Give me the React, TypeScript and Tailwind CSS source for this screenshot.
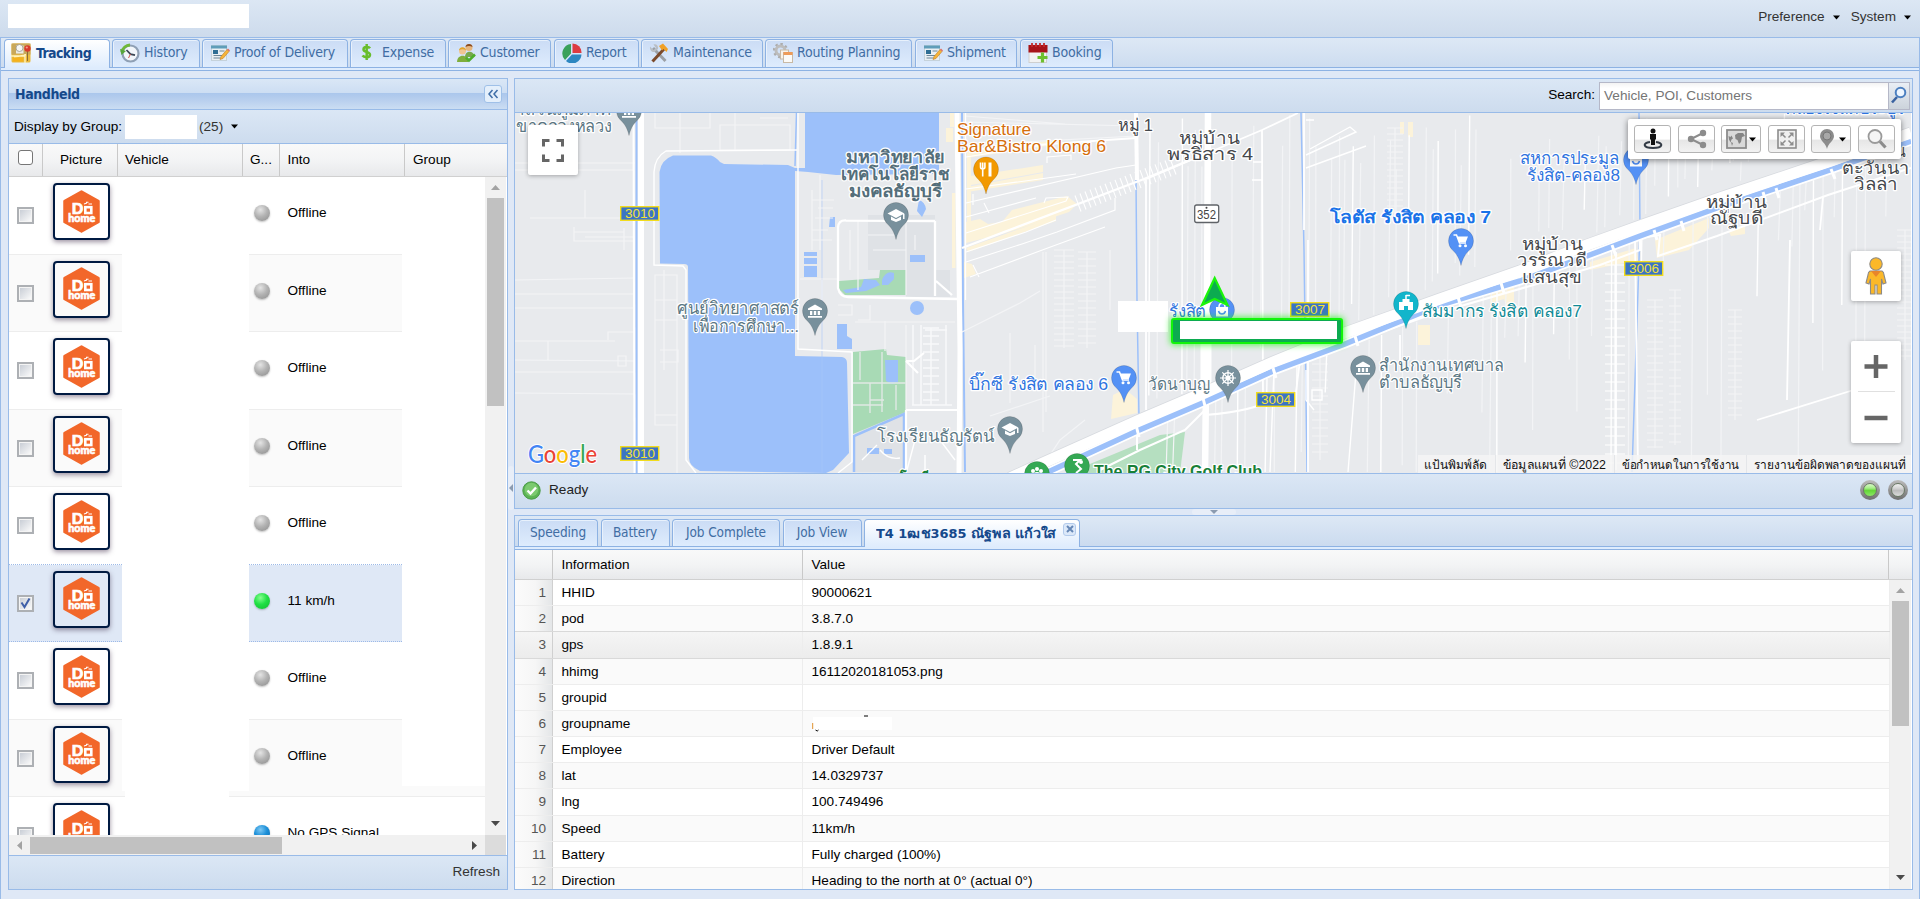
import React from "react";

const TAHOMA = "font-['DejaVu_Sans_Condensed','DejaVu_Sans',sans-serif] [font-stretch:condensed]";

/* ---------- toolbar and tab icons ---------- */

function TabIcon({ name }: { name: string }) {
  switch (name) {
    case "tracking":
      return (
        <svg width="20" height="20" viewBox="0 0 20 20" className="shrink-0">
          <rect x="0.5" y="0.5" width="19" height="19" rx="1.5" fill="#e9b93c" />
          <rect x="0.5" y="0.5" width="19" height="11" fill="#c9a85a" />
          <path d="M0 13h14M3 14l12-2M14 11v9" stroke="#fff3bd" strokeWidth="1.400" />
          <rect x="5" y="2.500" width="7.500" height="8" fill="#ecebe4" />
          <circle cx="8.500" cy="5" r="3.500" fill="#f6f6f2" stroke="#9b968a" strokeWidth=".8" />
          <rect x="2" y="14.500" width="10" height="4" fill="#f5b21d" />
          <path d="M16.500 7v11" stroke="#8b6b35" strokeWidth="1" />
          <circle cx="16.500" cy="5.500" r="3.200" fill="#d93a2c" />
          <circle cx="15.800" cy="4.500" r="1.100" fill="#f39a8d" />
        </svg>
      );
    case "history":
      return (
        <svg width="20" height="20" viewBox="0 0 20 20" className="shrink-0">
          <circle cx="10.500" cy="10.500" r="8" fill="#f2f6fa" stroke="#8fa0b5" strokeWidth="2.200" />
          <path d="M6.500 7l4 4.200 4.500 1" stroke="#3c4653" strokeWidth="1.700" fill="none" />
          <path d="M10.500 11l-2 4" stroke="#d4544c" strokeWidth="1" />
          <path d="M2 9A8.400 8.400 0 0 1 10 2" stroke="#6fb83a" strokeWidth="3" fill="none" />
          <path d="M0 6l1.500 6L6 8z" fill="#58a63c" />
        </svg>
      );
    case "pod":
      return (
        <svg width="20" height="20" viewBox="0 0 20 20" className="shrink-0">
          <rect x="1.500" y="2.500" width="15" height="15" fill="#e9eff3" stroke="#c5d2db" />
          <rect x="1" y="2.500" width="16" height="3" fill="#5f9db9" />
          <rect x="3" y="7" width="5" height="4" fill="#2f6e94" />
          <path d="M9.500 8h5M3.500 12.500h9M3.500 15h7" stroke="#6d8798" />
          <path d="M17 6.500l2 2-6 7-3 1 1-3z" fill="#f6b53a" stroke="#c07a22" strokeWidth=".6" />
          <path d="M17 6.500l1-1 2 2-1 1z" fill="#dd6f68" />
        </svg>
      );
    case "expense":
      return (
        <svg width="20" height="20" viewBox="0 0 20 20" className="shrink-0">
          <path
            d="M12 5.200c-1-1.500-6.500-1.800-6.500 1.200 0 3.300 6.500 2 6.500 5.400 0 3.300-6 2.900-7.500.8M8.700 1v16"
            stroke="#68bd2c"
            strokeWidth="2.500"
            fill="none"
          />
        </svg>
      );
    case "customer":
      return (
        <svg width="20" height="20" viewBox="0 0 20 20" className="shrink-0">
          <circle cx="13" cy="4.500" r="3.500" fill="#e7b67d" />
          <path d="M9.500 4c0-4 7-4 7 0-2-1.500-5-1.500-7 0z" fill="#8a4b20" />
          <path d="M9 14c0-7 9-7 9.500 0z" fill="#78a84d" />
          <circle cx="6.500" cy="8" r="3.500" fill="#f0c592" />
          <path d="M3 7.500c0-4.500 7-4.500 7 0-2-1.600-5-1.600-7 0z" fill="#e0a52b" />
          <path d="M1 19c0-8.500 11-8.500 11.500 0z" fill="#7fae3d" />
          <path d="M10 14.500l3 3 6-6" stroke="#4eae2c" strokeWidth="2.500" fill="none" />
        </svg>
      );
    case "report":
      return (
        <svg width="20" height="20" viewBox="0 0 20 20" className="shrink-0">
          <path d="M9 1v9.500L3 17A9.500 9.500 0 0 1 9 1z" fill="#3aa15a" />
          <path d="M10.500 0.500a9 9 0 0 1 9 9.500h-9z" fill="#dd3b41" />
          <path d="M10 11.500h9.500A9.300 9.300 0 0 1 4 18z" fill="#2d87c1" />
        </svg>
      );
    case "maintenance":
      return (
        <svg width="20" height="20" viewBox="0 0 20 20" className="shrink-0">
          <path d="M4 5l12.500 13" stroke="#9ba0a6" strokeWidth="3" />
          <path d="M1 3.500l3.500 3.800L7 5 4.500 1.500c3-.7 5 1.500 4.500 4.500L5.500 9C3 9.500.5 7 1 3.500z" fill="#b9bec4" />
          <path d="M15 6L3.500 18.500" stroke="#7b4a2b" strokeWidth="3" />
          <path d="M10 3l4-2.500 5 5.500-1.500 3-3-3-1.500 1.500z" fill="#f0a127" />
        </svg>
      );
    case "routing":
      return (
        <svg width="20" height="20" viewBox="0 0 20 20" className="shrink-0">
          <circle cx="7.500" cy="7.500" r="4.500" fill="none" stroke="#bdbdbd" strokeWidth="3" />
          <circle cx="7.500" cy="7.500" r="6.700" fill="none" stroke="#adadad" strokeWidth="2" strokeDasharray="2.500 2.700" />
          <rect x="7.500" y="7" width="8" height="9" fill="#f7f2ea" stroke="#c8b9a5" />
          <rect x="10.500" y="9.500" width="9" height="10" fill="#fbfaf7" stroke="#c8b9a5" />
          <rect x="10.500" y="9" width="9" height="3" fill="#ee9b58" />
        </svg>
      );
    default:
      return (
        <svg width="20" height="20" viewBox="0 0 20 20" className="shrink-0">
          <rect x="1" y="2.500" width="17.500" height="17" fill="#f2f2f2" stroke="#cfcfcf" />
          <rect x="0.500" y="2" width="19" height="7.500" fill="#a71319" />
          <path d="M4 0v4M8 0v4M12 0v4M16 0v4" stroke="#c22a2a" strokeWidth="1.800" />
          <path d="M14.500 9.500v10M9.500 14.500h10" stroke="#6cc02f" strokeWidth="3.200" />
        </svg>
      );
  }
}

const Caret = () => (
  <svg width="7" height="5" viewBox="0 0 7 5">
    <path d="M0 0.500h7L3.500 4.500z" fill="#000" />
  </svg>
);

/* ---------- main tabs ---------- */

const MAIN_TABS: { label: string; icon: string; box: string; gap: string }[] = [
  { label: "History", icon: "history", box: "w-[88px] ml-[2px]", gap: "ml-[4px]" },
  { label: "Proof of Delivery", icon: "pod", box: "w-[146px] ml-[2px]", gap: "ml-[4px]" },
  { label: "Expense", icon: "expense", box: "w-[96px] ml-[2px]", gap: "ml-[4px]" },
  { label: "Customer", icon: "customer", box: "w-[103px] ml-[2px]", gap: "ml-[4px]" },
  { label: "Report", icon: "report", box: "w-[85px] ml-[3px]", gap: "ml-[4px]" },
  { label: "Maintenance", icon: "maintenance", box: "w-[122px] ml-[2px]", gap: "ml-[4px]" },
  { label: "Routing Planning", icon: "routing", box: "w-[147px] ml-[2px]", gap: "ml-[4px]" },
  { label: "Shipment", icon: "pod", box: "w-[102px] ml-[3px]", gap: "ml-[4px]" },
  { label: "Booking", icon: "booking", box: "w-[93px] ml-[3px]", gap: "ml-[4px]" },
];

function MainTabs() {
  return (
    <div className="h-[34px] shrink-0 bg-gradient-to-b from-[#dde8f5] to-[#cbdbef] border-t border-[#99bbe8] flex flex-col">
      <div className={`flex items-end h-[30px] pl-[3px] text-[14px] text-[#416da3] border-b border-[#8db2e3] shrink-0 ${TAHOMA}`}>
        <div className="h-[29px] -mb-px w-[106px] rounded-t-[4px] border border-b-0 border-[#8db2e3] bg-gradient-to-b from-white to-[#deecfd] flex items-center pl-[6px] pb-[2px] gap-[5px] font-bold text-[#15498b] tracking-[-0.6px] whitespace-nowrap z-10">
          <TabIcon name="tracking" />
          Tracking
        </div>
        {MAIN_TABS.map((t) => (
          <div
            key={t.label}
            className={`${t.box} h-[28px] rounded-t-[4px] border border-b-0 border-[#8db2e3] bg-gradient-to-b from-[#cbdcf5] to-[#deecfd] shadow-[inset_0_1px_0_#e8f1fc,inset_1px_0_0_#e8f1fc] flex items-center pl-[7px] pb-[2px] whitespace-nowrap tracking-[-0.2px]`}
          >
            <TabIcon name={t.icon} />
            <span className={t.gap}>{t.label}</span>
          </div>
        ))}
      </div>
      <div className="h-[3px] bg-[#deecfd] border-b border-[#8db2e3]" />
    </div>
  );
}

/* ---------- left panel ---------- */

function Logo() {
  return (
    <div className="w-[57px] h-[57px] rounded-[4px] border-2 border-[#001a42] shadow-[0_2px_5px_rgba(60,40,70,0.5)] flex items-center justify-center pb-px">
      <svg width="39" height="43" viewBox="0 0 39 43">
        <path d="M19.500 1.500L36.500 11v21L19.500 41.500 2.500 32V11z" fill="#f2672a" stroke="#f2672a" strokeWidth="2.500" strokeLinejoin="round" />
        <text x="9.800" y="24" fontSize="15" fontWeight="900" fill="#fff" stroke="#fff" strokeWidth=".7" fontFamily="Lato" textLength="11.500" lengthAdjust="spacingAndGlyphs">
          D
        </text>
        <rect x="23.300" y="17.200" width="6" height="5.800" fill="none" stroke="#fff" strokeWidth="2.600" />
        <path d="M22 14l3-1M26.500 14h3.500M24 12.300h2.500" stroke="#fff" strokeWidth="1.100" />
        <text x="6.200" y="32.300" fontSize="10.500" fontWeight="900" fill="#fff" stroke="#fff" strokeWidth=".6" fontFamily="Lato" textLength="27" lengthAdjust="spacingAndGlyphs">
          home
        </text>
      </svg>
    </div>
  );
}

function Check({ on }: { on?: boolean }) {
  return (
    <div className="w-[17px] h-[17px] border-2 border-[#adb0b4] bg-[#f4f4f4] p-px">
      <div className="w-full h-full bg-gradient-to-br from-[#c9ced6] to-[#fafafa]">
        {on && (
          <svg width="11" height="11" viewBox="0 0 11 11">
            <path d="M1.500 4.500l3 4.500 5-8.500" fill="none" stroke="#3f5fa8" strokeWidth="2" />
          </svg>
        )}
      </div>
    </div>
  );
}

const BALLS: Record<string, string> = {
  gray: "bg-[radial-gradient(circle_at_40%_30%,#e4e4e4_0%,#b4b4b4_45%,#8b8b8b_100%)]",
  green: "bg-[radial-gradient(circle_at_40%_30%,#86ff8f_0%,#21e045_45%,#12ba2e_100%)]",
  blue: "bg-[radial-gradient(circle_at_40%_30%,#7cc8f4_0%,#1c8fd8_45%,#0f6cae_100%)]",
};

const VEHICLES = [
  { status: "Offline", ball: "gray" },
  { status: "Offline", ball: "gray" },
  { status: "Offline", ball: "gray" },
  { status: "Offline", ball: "gray" },
  { status: "Offline", ball: "gray" },
  { status: "11 km/h", ball: "green" },
  { status: "Offline", ball: "gray" },
  { status: "Offline", ball: "gray" },
  { status: "No GPS Signal", ball: "blue" },
];

function VehicleRow({ index }: { index: number }) {
  const v = VEHICLES[index];
  const selected = index === 5;
  const alt = index % 2 === 1;
  const line = selected
    ? "border-b border-dotted border-[#9dbae8] bg-[#dfe8f6]"
    : index === 4
      ? "border-b border-dotted border-[#9dbae8]"
      : alt
        ? "border-b border-[#ededed] bg-[#fafafa]"
        : "border-b border-[#ededed]";
  const partial = index === 7;
  return (
    <div className="flex h-[77.5px] shrink-0">
      <div className={`w-[113px] flex ${line}`}>
        <div className="w-[34px] pl-[8px] pt-[30px]">
          <Check on={selected} />
        </div>
        <div className="pt-[6px] pl-[10px]">
          <Logo />
        </div>
      </div>
      <div className="w-[127px] flex items-end justify-between">
        {partial && <div className="w-[3px] h-[6px] bg-[#fafafa] border-b border-[#ededed]" />}
        {partial && <div className="w-[20px] h-[6px] bg-[#fafafa] border-b border-[#ededed]" />}
      </div>
      <div className={`w-[153px] flex items-start ${line}`}>
        <div className={`mt-[28px] ml-[5px] size-[16px] rounded-full shadow-[0_1px_2px_rgba(0,0,0,0.25)] ${BALLS[v.ball]}`} />
        <div className="mt-[26px] ml-[17.500px] leading-[20px] whitespace-nowrap">{v.status}</div>
      </div>
      <div className="w-[83px] flex items-end">
        {partial && <div className="w-full h-[11px] bg-[#fafafa] border-b border-[#ededed]" />}
      </div>
    </div>
  );
}

const HEAD = "bg-gradient-to-b from-[#f9f9f9] via-[#f3f4f5] to-[#e8e9eb]";

function Arrow({ dir, dark }: { dir: "up" | "down" | "left" | "right"; dark?: boolean }) {
  const d = { up: "M1 7l4.500-5 4.500 5z", down: "M1 3l4.500 5L10 3z", left: "M8 1L3 5.500 8 10z", right: "M3 1l5 4.500L3 10z" }[dir];
  return (
    <svg width="11" height="11" viewBox="0 0 11 11">
      <path d={d} fill={dark ? "#4a4a4a" : "#a3a3a3"} />
    </svg>
  );
}

function LeftPanel() {
  return (
    <div className="w-[500px] h-[812px] border border-[#99bbe8] flex flex-col shrink-0 bg-white">
      <div className={`h-[31px] shrink-0 border-b border-[#99bbe8] bg-[linear-gradient(#dae7f6_0%,#cddef3_45%,#abc7ec_48%,#b8cfee_70%,#cbddf3_100%)] flex items-center justify-between pl-[6px] pr-[5px] text-[14px] font-bold text-[#15498b] tracking-[-0.4px] ${TAHOMA}`}>
        Handheld
        <div className="size-[18px] rounded-[3px] border border-[#9fc0e8] bg-[#e4effb] flex items-center justify-center">
          <svg width="12" height="12" viewBox="0 0 12 12">
            <path d="M5.500 2L2 6l3.500 4M10.500 2L7 6l3.500 4" fill="none" stroke="#3f6ea8" strokeWidth="1.500" />
          </svg>
        </div>
      </div>
      <div className="h-[34px] shrink-0 border-b border-[#99bbe8] bg-gradient-to-b from-[#dbe7f5] to-[#cddcee] flex items-center pl-[5px]">
        <span className="w-[111px] pt-[2px] whitespace-nowrap">Display by Group:</span>
        <span className="w-[72px] h-[24px] bg-white" />
        <span className="ml-[2px] pt-[2px] text-[#333]">(25)</span>
        <span className="ml-[8px] flex">
          <Caret />
        </span>
      </div>
      <div className={`h-[33px] shrink-0 flex border-b border-[#d0d0d0] leading-[32px] ${HEAD}`}>
        <div className="w-[34px] border-r border-[#c9c9c9] pl-[9px] pt-[6px]">
          <div className="size-[15px] rounded-[3px] border-[1.500px] border-[#767676] bg-white" />
        </div>
        <div className="w-[75px] border-r border-[#c9c9c9] pl-[17px]">Picture</div>
        <div className="w-[125px] border-r border-[#c9c9c9] pl-[7px]">Vehicle</div>
        <div className="w-[37px] border-r border-[#c9c9c9] pl-[7px]">G...</div>
        <div className="w-[125px] border-r border-[#c9c9c9] pl-[7.500px]">Into</div>
        <div className="pl-[8px]">Group</div>
      </div>
      <div className="h-[658px] shrink-0 flex">
        <div className="w-[476px] h-full overflow-hidden flex flex-col">
          {VEHICLES.map((_, i) => (
            <VehicleRow key={i} index={i} />
          ))}
        </div>
        <div className="w-[21px] h-full bg-[#f1f1f1] flex flex-col items-center justify-between">
          <div className="flex flex-col items-center pt-[6px]">
            <Arrow dir="up" />
            <div className="mt-[4px] w-[17px] h-[208px] bg-[#c1c1c1]" />
          </div>
          <div className="pb-[6px]">
            <Arrow dir="down" dark />
          </div>
        </div>
      </div>
      <div className="h-[20px] shrink-0 flex">
        <div className="w-[476px] bg-[#f1f1f1] flex items-center">
          <div className="w-[21px] pl-[5px]">
            <Arrow dir="left" />
          </div>
          <div className="w-[252px] h-[17px] bg-[#c1c1c1]" />
          <div className="ml-auto pr-[5px]">
            <Arrow dir="right" dark />
          </div>
        </div>
        <div className="w-[21px] bg-[#dcdcdc]" />
      </div>
      <div className="flex-1 border-t border-[#99bbe8] bg-gradient-to-b from-[#dbe7f5] to-[#cddcee] flex items-center justify-end pr-[7px] text-[#333]">
        Refresh
      </div>
    </div>
  );
}

/* ---------- map ---------- */

const GLYPHS: Record<string, React.ReactNode> = {
  museum: (
    <g fill="#fff">
      <path d="M-7-2.500L0-6.500 7-2.500V-1H-7z" />
      <path d="M-5 0h2.300v4H-5zM-1.200 0h2.400v4h-2.400zM2.700 0H5v4H2.700zM-7 5H7v1.700H-7z" />
    </g>
  ),
  school: (
    <g fill="#fff">
      <path d="M0-6L8.500-1.500 0 3-8.500-1.500z" />
      <path d="M-5 1.500L0 4.200 5 1.500V5L0 7-5 5zM7-1h1.500v5H7z" />
    </g>
  ),
  food: (
    <g stroke="#fff" strokeWidth="1.600" fill="none">
      <path d="M-5.500-7v4.500q0 2 2.200 2t2.200-2V-7M-3.300-7v14" />
      <path d="M4-7v14" strokeWidth="3" />
    </g>
  ),
  cart: (
    <g>
      <path d="M-7.500-6h3l3 8H5" stroke="#fff" strokeWidth="1.500" fill="none" />
      <path d="M-4-4.500H7L4.800 1H-2z" fill="#fff" />
      <circle cx="-1" cy="4.800" r="1.500" fill="#fff" />
      <circle cx="4.500" cy="4.800" r="1.500" fill="#fff" />
    </g>
  ),
  wheel: (
    <g stroke="#fff" fill="none" strokeWidth="1.500">
      <circle r="5.200" />
      <circle r="1.800" />
      <path d="M0-8V8M-8 0H8M-5.700-5.700L5.700 5.700M-5.700 5.700L5.700-5.700" strokeWidth="1.200" />
    </g>
  ),
  city: (
    <g>
      <path d="M-7-2h14v8h-5V2h-4v4h-5zM-3.500-5h7v3h-7z" fill="#fff" />
      <path d="M0-9v4M0-8.500h4" stroke="#fff" strokeWidth="1.500" />
    </g>
  ),
  bag: (
    <g>
      <path d="M-6-3H6V6.500H-6z" fill="#fff" />
      <path d="M-3-3c0-5 6-5 6 0" stroke="#fff" strokeWidth="1.500" fill="none" />
      <path d="M-3.500 1c1 4 6 4 7 0" stroke="#4f8df5" strokeWidth="1.500" fill="none" />
    </g>
  ),
  golf: (
    <g stroke="#fff" fill="none" strokeWidth="2">
      <path d="M-4-6H3L-1-2 4 3-1 7" />
      <circle cx="4" cy="-4" r="1" />
    </g>
  ),
  park: (
    <g fill="#fff">
      <circle cx="-4" cy="-3" r="2" />
      <circle cx="0" cy="-5" r="2" />
      <circle cx="4" cy="-3" r="2" />
      <circle cy="2" r="4" />
    </g>
  ),
};

const PINS: [number, number, string, string][] = [
  [629, 111, "#78909c", "museum"],
  [896, 215, "#78909c", "school"],
  [815, 311, "#78909c", "museum"],
  [986, 169.5, "#f29900", "food"],
  [1124, 378, "#5491f5", "cart"],
  [1228, 378, "#78909c", "wheel"],
  [1010, 429, "#78909c", "school"],
  [1037, 474, "#34a853", "park"],
  [1077, 466, "#34a853", "golf"],
  [1406, 304, "#12b5cb", "city"],
  [1363, 368, "#78909c", "museum"],
  [1461, 241, "#5491f5", "cart"],
  [1636, 160, "#5491f5", "bag"],
  [1222, 310, "#5491f5", "bag"],
];

/* text, x, baseline, width, colour, weight */
const SLATE = "#5b7784";
const BLUE = "#1a73e8";
const DARK = "#45484c";
const LABELS: [string, number, number, number, string, number][] = [
  ["าส่วนภูมิภาค", 515, 115, 96, SLATE, 400],
  ["ขาคลองหลวง", 516, 132, 96, SLATE, 400],
  ["มหาวิทยาลัย", 846, 163, 99, "#546e7a", 600],
  ["เทคโนโลยีราช", 841, 180, 109, "#546e7a", 600],
  ["มงคลธัญบุรี", 849, 197, 93, "#546e7a", 600],
  ["ศูนย์วิทยาศาสตร์", 677, 314, 122, SLATE, 400],
  ["เพื่อการศึกษา...", 693, 332, 106, SLATE, 400],
  ["Signature", 957, 135, 74, "#d56e0c", 400],
  ["Bar&Bistro Klong 6", 957, 152, 149, "#d56e0c", 400],
  ["หมู่ 1", 1118, 131, 35, DARK, 500],
  ["หมู่บ้าน", 1179, 144, 61, DARK, 500],
  ["พรธิสาร 4", 1167, 160, 86, DARK, 500],
  ["โลตัส รังสิต คลอง 7", 1330, 223, 161, BLUE, 600],
  ["บิ๊กซี รังสิต คลอง 6", 969, 390, 139, "#2f74e0", 400],
  ["วัดนาบุญ", 1148, 390, 62, SLATE, 400],
  ["โรงเรียนธัญรัตน์", 877, 442, 118, SLATE, 400],
  ["รังสิต", 1169, 317, 37, "#2f74e0", 400],
  ["สัมมากร รังสิต คลอง7", 1422, 317, 160, "#128b97", 400],
  ["สำนักงานเทศบาล", 1379, 371, 125, SLATE, 400],
  ["ตำบลธัญบุรี", 1379, 388, 83, SLATE, 400],
  ["สหการประมูล", 1520, 164, 99, "#2f74e0", 400],
  ["รังสิต-คลอง8", 1527, 181, 93, "#2f74e0", 400],
  ["หมู่บ้าน", 1706, 208, 61, DARK, 500],
  ["ณัฐบดี", 1710, 224, 53, DARK, 500],
  ["หมู่บ้าน", 1522, 250, 61, DARK, 500],
  ["วรรณวดี", 1517, 266, 70, DARK, 500],
  ["แสนสุข", 1522, 283, 60, DARK, 500],
  ["น", 1896, 157, 10, DARK, 500],
  ["ตะวันนา", 1842, 174, 68, DARK, 500],
  ["วิลล่า", 1854, 190, 44, DARK, 500],
  ["คลองรังสิตประยูร", 1785, 114, 120, "#2f74e0", 400],
  ["The RG City Golf Club", 1094, 477, 168, "#188038", 700],
  ["โรงเรียน", 900, 485, 45, "#188038", 600],
];

const SHIELDS: [number, number, string][] = [
  [620, 206, "3010"],
  [620, 446, "3010"],
  [1290, 302, "3007"],
  [1256, 392, "3004"],
  [1624, 261, "3006"],
];

const MAIN_ROAD = "M1010 478L1043 463 1137 421 1205 392 1273 362 1342 334 1440 299 1520 271 1587 245 1640 226 1717 199 1833 160 1911 133";
const CANAL = "M1035 478L1137 431 1205 402 1273 371 1345 344 1440 305 1520 281 1587 256 1640 236 1717 208 1833 169 1911 141";

/* y of the main road at a given x, used to keep side streets off it */
function roadY(x: number) {
  const p = [[1010, 478], [1137, 421], [1273, 362], [1440, 299], [1587, 245], [1717, 199], [1911, 133]];
  for (let i = 1; i < p.length; i++) {
    if (x <= p[i][0]) {
      const t = (x - p[i - 1][0]) / (p[i][0] - p[i - 1][0]);
      return p[i - 1][1] + t * (p[i][1] - p[i - 1][1]);
    }
  }
  return 133;
}

const rnd = (n: number) => {
  const v = Math.sin(n * 127.1) * 43758.5453;
  return v - Math.floor(v);
};

function sideStreets() {
  let white = "";
  let faint = "";
  for (let i = 0; i < 105; i++) {
    const x = 1150 + i * 7.2 + rnd(i) * 4;
    const ry = roadY(x);
    const up = rnd(i + 300) > 0.45;
    const y1 = up ? 113 + rnd(i + 50) * 60 : ry + 14;
    const y2 = up ? Math.max(y1, ry - 6 - rnd(i + 90) * 30) : Math.min(472, ry + 40 + rnd(i + 70) * 260);
    const seg = `M${x.toFixed(1)} ${y1.toFixed(1)}L${(x - 2 + rnd(i + 7) * 2).toFixed(1)} ${y2.toFixed(1)}`;
    if (i % 4 === 0) white += seg;
    else faint += seg;
  }
  return { white, faint };
}

const STREETS = sideStreets();

function comb(x: number, y1: number, y2: number, w: number, step: number) {
  let d = `M${x} ${y1}V${y2}`;
  for (let y = y1; y < y2; y += step) d += `M${x - w} ${y}h${w * 2}`;
  return d;
}

/* short lanes crossing the street that climbs from 966,248 to 1190,160 */
function lanes() {
  let d = "";
  for (let x = 1078; x < 1178; x += 5) {
    const y = 248 - ((x - 966) * 70) / 180;
    d += `M${x - 3} ${y - 9}l6 16`;
  }
  return d;
}

const LANES = lanes();

function MapDrawing() {
  return (
    <svg width="1396" height="360" viewBox="515 113 1396 360" className="block">
      <rect x="515" y="113" width="1396" height="360" fill="#e8eaed" />
      <path d="M868 215h67v55h-67zM906 270h44v27h-44zM855 432l50-20v60h-50z" fill="#dfe2e6" />

      {/* commercial areas */}
      <g fill="#fcf3da">
        <path d="M950 113h4v14h-4zM946 128h7v14h-7zM952 193h3.500v75h-3.500z" />
        <path d="M967 155h4v68h-4zM971 176l72-11v7l-72 13zM967 187l76-14v7l-76 12zM967 152l80-11v5l-80 12z" />
        <path d="M966 243V222l14-3 8 5 14-2 10-12 55-14 10 8-8 8-60 20zM966 248l90-32v5l-88 31zM964 262l8 2 4 10-12 4z" />
        <path d="M1113 395l12-6 12 10v14l-26 6zM1408 122h5v15h-5zM1400 122h4v12h-4z" />
        <path d="M1590 262l46-14 2 12-48 10zM1655 240l54-22v10l-20 22-32 8zM1729 232l16-6v8l-14 2zM1490 293l24-8v20h-8l-2-6-14 4zM1418 325h12v20h-12z" />
      </g>

      {/* parks */}
      <path d="M839 281l40-3 1-8h26v25h-61l-6-6zM853 352l33-3 1 6 19 2v55l-53 22z" fill="#a8dab5" />
      <path d="M1085 466l75-31 25-3-5 41h-94z" fill="#b5dfc0" />

      {/* water */}
      <g fill="#9cc0fa">
        <path d="M659.500 172Q661 160 673 155.500L711 155.500Q716 157 720 162L724 164 788 165 795 168V356L842 357Q847 358 847 363L849 453 833 470 826 473 700 471Q689 466 689 458L688 267Q688 264 684 264L660 263.500z" />
        <path d="M805 113H939V174L836 175 808 172 795 171V168H805z" />
        <path d="M804 252h13v4h-13zM804 258h13v6h-13zM804 266h13v11h-13zM830 217h5v10h-6zM837 324h10v12l5 3v10h-15zM910 255h15v7h-15zM919 200q6 2 7 9l-4 8-5-6zM885 360h13v22l-6 2-6-3z" />
        <path d="M843 290l18-3 3-8 12 1 4 5-14 6-20 2zM882 280q4-10 12-7v6l-6 6h-6z" />
        <ellipse cx="917" cy="308" rx="7" ry="7" />
        <path d="M867 448h12v6h-12zM884 449h8v5h-8z" />
      </g>
      <g fill="none" stroke="#9cc0fa">
        <path d="M636.500 113V473" strokeWidth="2" />
        <path d="M796.500 113L795 166" strokeWidth="1.500" />
        <path d="M962 113L963 300 965 472" strokeWidth="2" />
        <path d="M1136 180L1137 300 1139 418" strokeWidth="1.500" />
        <path d="M1301 113L1304 250 1307 472" strokeWidth="1.500" />
        <path d="M1639 113L1640 230 1632 472" strokeWidth="1.500" />
        <path d="M854 472V436L904 414V473" strokeWidth="2.500" />
        <path d="M822 180V473" stroke="#a9c8fa" strokeWidth=".6" />
      </g>

      {/* faint streets */}
      <g fill="none" stroke="#f3f4f6" strokeWidth="1.200">
        <path d={STREETS.faint} />
        <path d="M515 163h120M515 170h118M585 190v28M530 218h104M574 227v14h60M574 232h50M585 237h50M515 280l120-2M515 294h120M515 308h118M608 340v-8h26M515 341h100M548 341v20M515 360l120 1M515 372h120M515 393l120 1M624 228v22M618 356v10h8v-10z" />
        <path d={comb(1064, 250, 348, 10, 6)} />
        <path d={comb(1087, 252, 348, 9, 7)} />
        <path d={comb(1320, 340, 460, 8, 8)} />
        <path d={comb(1395, 128, 220, 8, 6)} />
        <path d={comb(1655, 300, 448, 8, 7)} />
        <path d={comb(1675, 290, 445, 6, 8)} />
        <path d={comb(1735, 310, 420, 7, 7)} />
        <path d={comb(1905, 230, 360, 8, 6)} />
        <path d="M655 113v15h55v-15M680 113v40M720 125h70v25h-70zM735 113v38M760 118h28M655 275v150h22V275zM655 300h22M655 320h22M655 415h22v60M664 270v100M660 350h18v12h-18" />
        <path d="M812 190v60M820 175v75M812 200h22M818 208h15M815 218h18M812 230h16M812 240h20M850 230v40M858 220v70M868 235h30M873 250h33M906 220v75M915 235v15M800 279h38M822 280v20M838 305h14v10h-14M870 305v15h-12M885 321v30M906 325v140M855 322h100" />
        <path d="M965 116l100 8M965 122l170 4M966 145l170-9" />
        <path d="M1010 333v70M1035 345v45M1043 252v180M1046 252v160M990 416l60-20M960 333l60-30 20-12M1040 470l20-30 25-20M1110 250v60" />
      </g>
      <g fill="none" stroke="#fff" strokeWidth="1.100">
        <path d={LANES} />
        <path d="M966 203l150-35 20-3M966 217l70-19M984 203l5 10M973 194v11M966 233l100-32 2-4-22 1-2 5M1047 163v-6l24-2v5M966 252l60-20 30-12M966 262l56-18 35-12 58-22v-12M970 277l75-28 60-22M979 277l-6-12M966 189l110-15M966 157l90-14" />
      </g>
      <path d={comb(931, 328, 405, 8, 8)} stroke="#f8f9fa" strokeWidth="1.500" fill="none" />
      <path d="M913 325v80M921 325v80M946 325v80M912 405h40M925 330h22" stroke="#f8f9fa" strokeWidth="1.500" fill="none" />
      <path d={comb(1615, 265, 465, 10, 9)} stroke="#fff" strokeWidth="1.200" fill="none" />

      {/* streets */}
      <g fill="none" stroke="#fff" strokeWidth="1.400">
        <path d={STREETS.white} />
        <path d="M654 172Q655 157 666 151L797 150M654 172V265L683 266 686 270V460L696 473M798 113V349L852 352V462L838 473" />
        <path d="M1146 180V410M1144 180L1262 130 1298 113M1262 130L1263 400M1304 113V230M1308 240V472M1300 360l-5 40" strokeWidth="1.800" />
        <path d="M1306 155l50-23-6-5-40 22M1306 168l60-22M1306 120h8M1252 180h10M1253 162h9M1348 472l8-100M1274 370L1270 472M1306 370v30l8 10M1312 390h10v10h-10z" />
        <path d="M1205 410L1185 430 1140 450 1100 470M1205 415q60-5 70-20M1137 435v15" strokeWidth="2" />
        <path d="M1330 350L1430 315 1530 286 1600 265 1640 250V238L1660 235 1658 256 1717 236 1828 195 1911 168" strokeWidth="2" />
        <path d="M1757 420L1860 388M1790 240L1787 400M1823 197L1820 230M1616 252V470M1635 240L1638 470M1400 335v30" strokeWidth="1.800" />
        <path d="M860 380v-28M853 383h53M870 383v30M853 405h30M896 385v25M882 352v60M870 400h14" stroke="#e0e9e4" />
        <path d="M880 450q8 10 20 8M862 460l15-15M915 440l-8 30M925 455v18M940 440l15 20" />
      </g>
      <g fill="none" stroke="#fff">
        <path d="M838 228Q838 220 846 220.500L935 221M838 226V288Q840 297 848 297L958 299M935 221V296M952 295l-16-14" strokeWidth="2.300" />
        <path d="M906 410L960 410M906 410V472M906 361h8l10-8M906 361l12 12" strokeWidth="2.200" />
        <path d="M633.500 113L634.500 473" strokeWidth="2" />
        <path d="M641 113V473" strokeWidth="6" />
        <path d="M957 113L960 350 959 473" strokeWidth="5" />
        <path d="M965.500 113V300" strokeWidth="1.300" />
        <path d="M962 248L1144 179 1190 160" strokeWidth="2.200" />
        <path d="M966 150L1136 138" strokeWidth="1.800" />
        <path d="M1136 113L1137 180" strokeWidth="4" />
        <path d="M1208 113L1207 300 1205 473" strokeWidth="6.500" />
        <path d="M1206 335V400" strokeWidth="11" />
      </g>

      {/* main road with the canal beside it */}
      <path d={MAIN_ROAD} fill="none" stroke="#d7dadf" strokeWidth="12.500" />
      <path d={CANAL} fill="none" stroke="#fff" strokeWidth="9" />
      <path d={CANAL} fill="none" stroke="#9cc0fa" strokeWidth="5.500" />
      <path d={MAIN_ROAD} fill="none" stroke="#fff" strokeWidth="11" />
      <path d="M1136 425l3 12M1203 398l3 12M1273 368l3 10M1355 336l3 10M1458 297l3 10M1501 283l3 10M1612 245l4 11M1654 230l3 10M1681 221l3 10M1763 192l3 10M1776 188l3 10M1831 169l4 10" stroke="#fff" strokeWidth="3" />

      {/* signs */}
      {SHIELDS.map(([x, y, t]) => (
        <g key={`${x}-${y}`}>
          <rect x={x + 0.7} y={y + 0.7} width="38" height="13.600" fill="#3b74c4" stroke="#f2dc1c" strokeWidth="1.400" />
          <text x={x + 5} y={y + 12} fontSize="12" fill="#f5e235" fontFamily="Liberation Sans" textLength="30" lengthAdjust="spacingAndGlyphs">
            {t}
          </text>
        </g>
      ))}
      <rect x="1194.700" y="205" width="24" height="17.500" rx="2" fill="#fff" stroke="#5f6368" strokeWidth="1.300" />
      <text x="1197" y="219" fontSize="12" fill="#444" fontFamily="Liberation Sans" textLength="19" lengthAdjust="spacingAndGlyphs">
        352
      </text>
      <circle cx="1206.500" cy="207.800" r="1" fill="#444" />

      {PINS.map(([x, y, fill, glyph]) => (
        <g key={`${x}-${y}`} transform={`translate(${x} ${y})`}>
          <path
            d="M0 24.500C-2 16-5 12.500-9 8.600A12.500 12.500 0 1 1 9 8.600C5 12.500 2 16 0 24.500z"
            fill={fill}
            stroke="rgba(0,0,0,.18)"
            strokeWidth=".7"
          />
          {GLYPHS[glyph]}
        </g>
      ))}

      {LABELS.map(([t, x, y, w, c, weight], i) => (
        <text
          key={i}
          x={x}
          y={y}
          fontSize="17"
          fontWeight={weight}
          fill={c}
          stroke="#fff"
          strokeWidth="2.500"
          strokeLinejoin="round"
          paintOrder="stroke"
          fontFamily="Liberation Sans, sans-serif"
          textLength={w}
          lengthAdjust="spacingAndGlyphs"
        >
          {t}
        </text>
      ))}

      <text
        x="528"
        y="463"
        fontSize="25"
        fontFamily="Lato, sans-serif"
        fontWeight="500"
        stroke="#fff"
        strokeWidth="2"
        paintOrder="stroke"
        textLength="69"
        lengthAdjust="spacingAndGlyphs"
      >
        <tspan fill="#4285f4">G</tspan>
        <tspan fill="#ea4335">o</tspan>
        <tspan fill="#fbbc04">o</tspan>
        <tspan fill="#4285f4">g</tspan>
        <tspan fill="#34a853">l</tspan>
        <tspan fill="#ea4335">e</tspan>
      </text>

      {/* map credits */}
      <rect x="1418" y="455" width="493" height="18" fill="#f5f5f5" fillOpacity=".8" />
      <path d="M1495.500 455v18M1614.500 455v18M1746.500 455v18" stroke="#e4e6e9" />
      <g fontSize="12" fill="#111" fontFamily="Liberation Sans, sans-serif">
        <text x="1424" y="469" textLength="63" lengthAdjust="spacingAndGlyphs">แป้นพิมพ์ลัด</text>
        <text x="1503" y="469" textLength="103" lengthAdjust="spacingAndGlyphs">ข้อมูลแผนที่ ©2022</text>
        <text x="1622" y="469" textLength="117" lengthAdjust="spacingAndGlyphs">ข้อกำหนดในการใช้งาน</text>
        <text x="1754" y="469" textLength="152" lengthAdjust="spacingAndGlyphs">รายงานข้อผิดพลาดของแผนที่</text>
      </g>

      {/* tracked vehicle */}
      <rect x="1118" y="301" width="50" height="31" fill="#fff" />
      <path d="M1214.700 278L1202 305 1214.700 299 1227.500 305z" fill="#0cab50" stroke="#1bf50a" strokeWidth="2.200" />
    </svg>
  );
}

const TOOL = "h-[28px] rounded-[3px] border border-[#b4b4b4] bg-gradient-to-b from-white from-50% via-[#e6e6e6] via-55% to-[#f2f2f2] flex items-center justify-center gap-[2px]";

function MapTools() {
  return (
    <div className="absolute left-[1113px] top-[6px] w-[273px] h-[40px] bg-white rounded-[2px] shadow-[0_1px_6px_rgba(0,0,0,0.5)] flex items-center pl-[6px]">
      <div className={`${TOOL} w-[37px]`}>
        <svg width="22" height="22" viewBox="0 0 22 22">
          <circle cx="11" cy="3" r="2.500" fill="#111" />
          <path d="M8 6h6v5l-1 1v5H9v-5l-1-1z" fill="#111" />
          <path d="M8 14c-8 1-7 6 3 6s11-5 3-6" fill="none" stroke="#333b45" strokeWidth="2" />
        </svg>
      </div>
      <div className={`${TOOL} w-[37px] ml-[7px]`}>
        <svg width="20" height="20" viewBox="0 0 20 20" fill="#8c8c8c">
          <path d="M16 4L4 10l12 6" fill="none" stroke="#8c8c8c" strokeWidth="2" />
          <circle cx="16" cy="4" r="3.200" />
          <circle cx="4" cy="10" r="3.200" />
          <circle cx="16" cy="16" r="3.200" />
        </svg>
      </div>
      <div className={`${TOOL} w-[40px] ml-[6px]`}>
        <svg width="21" height="20" viewBox="0 0 21 20" className="shrink-0">
          <rect x="1" y="1" width="19" height="18" fill="#d9d9d9" stroke="#8c8c8c" strokeWidth="1.800" />
          <path d="M2.500 7l2 1 1-1.500 1.500 3-1.500 1-1 3-1.500-3zM5 13l2 1-1 3zM9 6l3-2 5 0 2 3-3 1-1 5-2 2-1.500-4-2-1z" fill="#858585" />
        </svg>
        <Caret />
      </div>
      <div className={`${TOOL} w-[37px] ml-[7px]`}>
        <svg width="20" height="20" viewBox="0 0 20 20">
          <rect x="1" y="1" width="18" height="18" fill="#f0f0f0" stroke="#8c8c8c" strokeWidth="1.600" />
          <path d="M3.500 8V3.500H8zM12 3.500h4.500V8zM3.500 12v4.500H8zM16.500 12v4.500H12z" fill="#8c8c8c" />
          <path d="M5 5l3.500 3.500M15 5l-3.500 3.500M5 15l3.500-3.500M15 15l-3.500-3.500" stroke="#8c8c8c" strokeWidth="1.500" />
        </svg>
      </div>
      <div className={`${TOOL} w-[40px] ml-[6px]`}>
        <svg width="20" height="20" viewBox="0 0 20 20">
          <path d="M10 20C9 14 3 12 3 7a7 7 0 0 1 14 0c0 5-6 7-7 13z" fill="#8c8c8c" />
          <circle cx="10" cy="7" r="4" fill="#a8a8a8" stroke="#777" />
        </svg>
        <Caret />
      </div>
      <div className={`${TOOL} w-[37px] ml-[7px]`}>
        <svg width="20" height="20" viewBox="0 0 20 20">
          <circle cx="8" cy="7.500" r="6.500" fill="#f5f5f5" stroke="#9a9a9a" strokeWidth="1.800" />
          <path d="M13 12.500l5.500 6" stroke="#8c8c8c" strokeWidth="3.200" />
        </svg>
      </div>
    </div>
  );
}

const MAPBTN = "absolute bg-white rounded-[2px] shadow-[0_1px_4px_rgba(0,0,0,0.3)]";

function MapView() {
  return (
    <div className="relative w-[1396px] h-[360px] overflow-hidden shrink-0">
      <MapDrawing />
      <div className={`${MAPBTN} left-[13px] top-[12px] size-[50px] flex items-center justify-center`}>
        <svg width="22" height="23" viewBox="0 0 22 23">
          <path d="M1.500 7.500v-6h6M14.500 1.500h6v6M20.500 15.500v6h-6M7.500 21.500h-6v-6" fill="none" stroke="#666" strokeWidth="3" />
        </svg>
      </div>
      <div className={`${MAPBTN} left-[1336px] top-[138px] size-[50px] flex items-center justify-center`}>
        <svg width="22" height="38" viewBox="0 0 22 38" stroke="#8d8a86" strokeWidth="1.100">
          <path d="M5 14h12q2 1 2 4l2 8-3 1-1.500-5v15H12V28h-2v9H5.500V22L4 27l-3-1 2-8q0-3 2-4z" fill="#fbb829" />
          <circle cx="11" cy="7" r="6.200" fill="#fbb829" />
          <path d="M6 14h10l-5 6z" fill="#e8852a" stroke="none" />
        </svg>
      </div>
      <div className={`${MAPBTN} left-[1336px] top-[228px] w-[50px] h-[102px] flex flex-col items-center`}>
        <svg width="50" height="50" viewBox="0 0 50 50">
          <path d="M13.500 25.500h23M25 14v23" stroke="#666" strokeWidth="4.500" />
        </svg>
        <div className="w-[37px] h-px bg-[#e0e0e0]" />
        <svg width="50" height="50" viewBox="0 0 50 50">
          <path d="M13.500 26h23" stroke="#666" strokeWidth="4.500" />
        </svg>
      </div>
      <MapTools />
      <div className="absolute left-[656px] top-[205px] w-[172px] h-[26px] rounded-[3px] border-2 border-[#12f50a] bg-[#0cab50] shadow-[0_0_6px_1px_rgba(30,245,20,0.7)] pl-[7px] pr-[4px] pt-px pb-[3px]">
        <div className="w-full h-[18px] bg-white" />
      </div>
    </div>
  );
}

/* ---------- details grid ---------- */

const DETAILS: [string, string][] = [
  ["HHID", "90000621"],
  ["pod", "3.8.7.0"],
  ["gps", "1.8.9.1"],
  ["hhimg", "16112020181053.png"],
  ["groupid", ""],
  ["groupname", ""],
  ["Employee", "Driver Default"],
  ["lat", "14.0329737"],
  ["lng", "100.749496"],
  ["Speed", "11km/h"],
  ["Battery", "Fully charged (100%)"],
  ["Direction", "Heading to the north at 0° (actual 0°)"],
];

function DetailRow({ index }: { index: number }) {
  const [name, value] = DETAILS[index];
  const over = index === 2;
  const bg = over
    ? "border-[#d9d9d9] bg-gradient-to-b from-[#f5f5f5] to-[#ececec]"
    : index === 1
      ? "border-[#d9d9d9] bg-[#fafafa]"
      : index % 2 === 1
        ? "border-[#ededed] bg-[#fafafa]"
        : "border-[#ededed] bg-white";
  return (
    <div className={`h-[26.180px] w-[1375px] shrink-0 flex border-b leading-[25px] ${bg}`}>
      <div
        className={`w-[38px] shrink-0 border-r border-[#d0d0d0] pr-[6px] text-right text-[#555] ${over ? "" : "bg-[linear-gradient(90deg,#fbfbfb_0%,#f6f6f6_55%,#e4e6e8_100%)]"}`}
      >
        {index + 1}
      </div>
      <div className="w-[250px] shrink-0 border-r border-[#ededed] pl-[8.500px]">{name}</div>
      <div className="flex-1 border-r border-[#ededed] pl-[8.500px]">
        {name === "groupname" ? (
          <svg width="82" height="19" viewBox="0 0 82 19" className="mt-[2px]">
            <rect x="1" y="4" width="79" height="13" fill="#fff" />
            <path d="M52 3h4" stroke="#000" />
            <path d="M.7 10v6" stroke="#e0922e" />
            <path d="M3.500 17q2 2 3 0" stroke="#000" fill="none" />
          </svg>
        ) : (
          value
        )}
      </div>
    </div>
  );
}

const INFO_TABS = [
  { label: "Speeding", width: "w-[80px]" },
  { label: "Battery", width: "w-[69px]" },
  { label: "Job Complete", width: "w-[108px]" },
  { label: "Job View", width: "w-[79px]" },
];

function DetailsPanel() {
  return (
    <div className="h-[375px] border border-[#99bbe8] bg-white flex flex-col">
      <div className={`h-[31px] shrink-0 bg-gradient-to-b from-[#dde8f5] to-[#cbdbef] border-b border-[#8db2e3] flex items-end pl-[3px] text-[13.500px] text-[#416da3] ${TAHOMA}`}>
        {INFO_TABS.map((t) => (
          <div
            key={t.label}
            className={`${t.width} mr-[2.500px] pb-[2px] h-[27px] rounded-t-[4px] border border-b-0 border-[#8db2e3] bg-gradient-to-b from-[#cbdcf5] to-[#deecfd] shadow-[inset_0_1px_0_#e8f1fc,inset_1px_0_0_#e8f1fc] flex items-center justify-center whitespace-nowrap tracking-[-0.1px]`}
          >
            {t.label}
          </div>
        ))}
        <div className="w-[216px] h-[28px] -mb-px rounded-t-[4px] border border-b-0 border-[#8db2e3] bg-gradient-to-b from-white to-[#deecfd] flex items-center pl-[11px] pr-[3px] pb-[2px] justify-between font-bold text-[#15498b] whitespace-nowrap">
          <svg width="182" height="24" viewBox="0 0 182 24">
            <text x="0" y="17" fontSize="13" fill="#15498b" textLength="180" lengthAdjust="spacingAndGlyphs">
              T4 1ฒช3685 ณัฐพล แก้วใส
            </text>
          </svg>
          <div className="size-[13px] mb-[7px] rounded-[3px] border border-[#b3cbec] bg-[#dbe8f9] flex items-center justify-center">
            <svg width="8" height="8" viewBox="0 0 8 8">
              <path d="M1 1l6 6M7 1L1 7" stroke="#6587b6" strokeWidth="2" />
            </svg>
          </div>
        </div>
      </div>
      <div className="h-[3px] shrink-0 bg-[#deecfd] border-b border-[#8db2e3]" />
      <div className={`h-[30px] shrink-0 flex border-b border-[#d0d0d0] leading-[29px] ${HEAD}`}>
        <div className="w-[38px] border-r border-[#c9c9c9]" />
        <div className="w-[250px] border-r border-[#c9c9c9] pl-[8.500px]">Information</div>
        <div className="w-[1086px] border-r border-[#c9c9c9] pl-[8.500px]">Value</div>
      </div>
      <div className="flex-1 min-h-0 flex overflow-hidden">
        <div className="w-[1375px] flex flex-col">
          {DETAILS.map((_, i) => (
            <DetailRow key={i} index={i} />
          ))}
        </div>
        <div className="w-[21px] bg-[#f1f1f1] flex flex-col items-center justify-between">
          <div className="flex flex-col items-center pt-[6px]">
            <Arrow dir="up" />
            <div className="mt-[4px] w-[17px] h-[125px] bg-[#c1c1c1]" />
          </div>
          <div className="pb-[6px]">
            <Arrow dir="down" dark />
          </div>
        </div>
      </div>
    </div>
  );
}

function Led({ on }: { on?: boolean }) {
  return (
    <div className="size-[20px] rounded-full bg-gradient-to-b from-[#bdbdbd] to-[#6f6f6f] flex items-center justify-center">
      <div
        className={`size-[14px] rounded-full border border-[#6b7a66] ${on ? "bg-[linear-gradient(#d9fbc9_0%,#a5ee86_35%,#63d636_55%,#8de868_100%)]" : "bg-[linear-gradient(#f0f0f0_0%,#d4d4d4_35%,#bcbcbc_55%,#dcdcdc_100%)]"}`}
      />
    </div>
  );
}

function RightColumn() {
  return (
    <div className="w-[1399px] shrink-0 flex flex-col">
      <div className="h-[431px] border border-[#99bbe8] bg-white flex flex-col shrink-0">
        <div className="h-[34px] shrink-0 border-b border-[#99bbe8] bg-gradient-to-b from-[#dbe7f5] to-[#cddcee] flex items-center justify-end pr-[2px]">
          <span className="mr-[4px]">Search:</span>
          <div className="w-[290px] h-[28px] border border-[#b5b8c8] bg-gradient-to-b from-[#f3f3f3] to-white to-20% flex items-center pl-[4px] pt-px text-[#757575]">
            Vehicle, POI, Customers
          </div>
          <div className="w-[21px] h-[28px] border border-l-0 border-[#b5b8c8] bg-gradient-to-b from-[#e9eef5] to-[#ccd3db] flex items-start justify-center pt-[3px]">
            <svg width="18" height="18" viewBox="0 0 18 18">
              <path d="M7 11L2 16.500" stroke="#3a62a0" strokeWidth="2.600" />
              <circle cx="10.500" cy="6.500" r="4.800" fill="#eef6ff" stroke="#4c7fc0" strokeWidth="2" />
            </svg>
          </div>
        </div>
        <MapView />
        <div className="flex-1 border-t border-[#99bbe8] bg-gradient-to-b from-[#dbe7f5] to-[#cddcee] flex items-center pl-[7px] pr-[4px] pb-[2px]">
          <svg width="19" height="19" viewBox="0 0 19 19">
            <circle cx="9.500" cy="9.500" r="8.700" fill="#5cb454" stroke="#4a9a45" />
            <circle cx="9.500" cy="8.500" r="6.800" fill="#7cca6f" />
            <path d="M5.500 9.500l3 3 5.500-6" stroke="#fff" strokeWidth="2.400" fill="none" />
          </svg>
          <span className="ml-[8px] text-[#222]">Ready</span>
          <div className="ml-auto flex gap-[8px]">
            <Led on />
            <Led />
          </div>
        </div>
      </div>
      <div className="h-[6px] shrink-0 flex items-center justify-center">
        <div className="w-[44px] h-[6px] rounded-[3px] bg-[#e8eef8] flex items-center justify-center">
          <svg width="8" height="4" viewBox="0 0 8 4">
            <path d="M0 0h8L4 4z" fill="#8b9bb0" />
          </svg>
        </div>
      </div>
      <DetailsPanel />
    </div>
  );
}

export default function App() {
  return (
    <div className="w-[1920px] h-[899px] overflow-hidden bg-[#dfe8f6] flex flex-col text-[13.600px] text-black font-['Liberation_Sans',Arial,sans-serif]">
      <div className="h-[37px] shrink-0 bg-gradient-to-b from-[#dce7f4] to-[#cddbec] flex items-start justify-between pl-[8px] pr-[9px] text-[#333]">
        <div className="mt-[4px] w-[241px] h-[24px] bg-white" />
        <div className="h-[34px] flex items-center">
          <span>Preference</span>
          <span className="ml-[8px]">
            <Caret />
          </span>
          <span className="ml-[11px]">System</span>
          <span className="ml-[8px]">
            <Caret />
          </span>
        </div>
      </div>
      <div className="flex-1 border-x border-[#99bbe8] flex flex-col min-h-0">
        <MainTabs />
        <div className="flex pt-[7px] pl-[7px]">
          <LeftPanel />
          <div className="w-[6px] shrink-0 flex flex-col pt-[388px]">
            <div className="h-[44px] rounded-[3px] bg-[#e8eef8] flex items-center justify-center">
              <svg width="4" height="8" viewBox="0 0 4 8">
                <path d="M4 0v8L0 4z" fill="#8b9bb0" />
              </svg>
            </div>
          </div>
          <RightColumn />
        </div>
      </div>
    </div>
  );
}
